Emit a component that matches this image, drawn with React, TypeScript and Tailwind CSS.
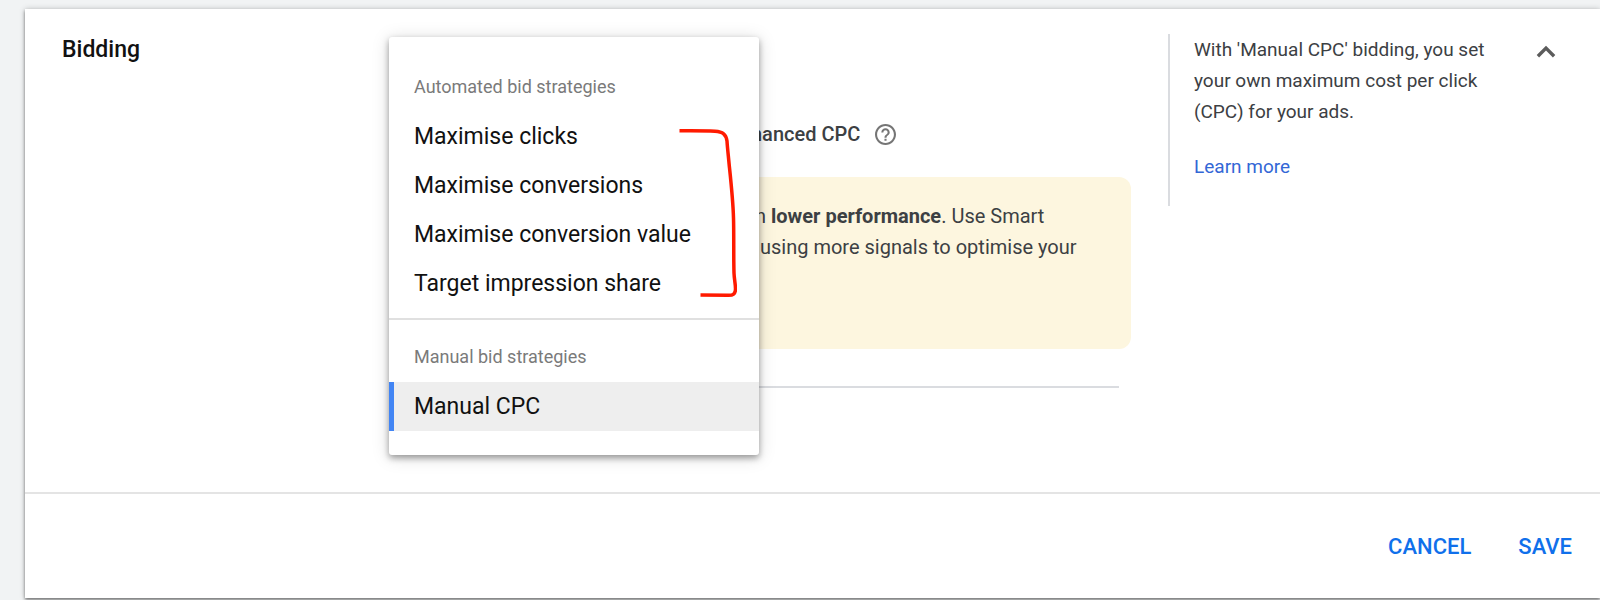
import { useState } from "react";

const automated = [
  "Maximise clicks",
  "Maximise conversions",
  "Maximise conversion value",
  "Target impression share",
];
const manual = ["Manual CPC"];

type GroupProps = {
  label: string;
  options: string[];
  selected: string;
  onSelect: (value: string) => void;
};

function StrategyGroup({ label, options, selected, onSelect }: GroupProps) {
  return (
    <div role="group" aria-label={label} className="flex flex-col">
      <div className="flex h-[51px] items-center px-[25px] text-[18px] text-[#7a7a7a]">
        {label}
      </div>
      {options.map((option) => (
        <button
          key={option}
          type="button"
          role="option"
          aria-selected={option === selected}
          onClick={() => onSelect(option)}
          className={
            option === selected
              ? "flex h-[49px] items-center border-l-5 border-[#4285f4] bg-[#eeeeee] pt-0.5 pl-5 text-left text-[23px] text-[#111111]"
              : "flex h-[49px] items-center px-[25px] pt-0.5 text-left text-[23px] text-[#111111]"
          }
        >
          {option}
        </button>
      ))}
    </div>
  );
}

export default function App() {
  const [selected, setSelected] = useState("Manual CPC");

  return (
    <div className="min-h-screen bg-[#f1f3f4] pt-[9px] pl-[25px] font-['Roboto',sans-serif]">
      <section className="bg-white shadow-[0_2px_3px_rgba(0,0,0,0.45),0_0_6px_rgba(0,0,0,0.2)]">
        <div className="flex pt-[25px]">
          <h2 className="w-[364px] shrink-0 pl-[37px] text-[23px] leading-[31px] font-medium text-[#111111]">
            Bidding
          </h2>

          <div className="relative w-[742px] shrink-0 pt-[84px] pb-[104px]">
            <div className="flex h-8 items-center gap-[15px] pl-[362px] text-[20px] font-medium text-[#3c4043]">
              <span>hanced CPC</span>
              <button type="button" aria-label="About Enhanced CPC">
                <svg viewBox="2 2 20 20" className="size-[21px] fill-[#757575]" aria-hidden="true">
                  <path d="M11 18h2v-2h-2v2zm1-16C6.48 2 2 6.48 2 12s4.48 10 10 10 10-4.48 10-10S17.52 2 12 2zm0 18c-4.41 0-8-3.59-8-8s3.59-8 8-8 8 3.59 8 8-3.59 8-8 8zm0-14c-2.21 0-4 1.79-4 4h2c0-1.1.9-2 2-2s2 .9 2 2c0 2-3 1.75-3 5h2c0-2.25 3-2.5 3-5 0-2.21-1.79-4-4-4z" />
                </svg>
              </button>
            </div>

            <div className="mt-[27px] h-[172px] rounded-xl bg-[#fdf6df] pt-6 pl-[366px] text-[20px] leading-[31px] text-[#3c4043]">
              <p>
                n <b>lower performance</b>. Use Smart
                <br />
                &nbsp;using more signals to optimise your
              </p>
            </div>

            <hr className="mt-[37px] mr-3 border-t-2 border-[#dadce0]" />

            <div
              role="listbox"
              aria-label="Bid strategy"
              className="absolute top-[3px] left-0 w-[370px] rounded-[3px] bg-white py-6 shadow-[0_3px_6px_rgba(0,0,0,0.35),0_2px_18px_rgba(0,0,0,0.15)]"
            >
              <StrategyGroup
                label="Automated bid strategies"
                options={automated}
                selected={selected}
                onSelect={setSelected}
              />
              <div className="mt-2.5 mb-[11px] border-t-2 border-[#e0e0e0]" />
              <StrategyGroup
                label="Manual bid strategies"
                options={manual}
                selected={selected}
                onSelect={setSelected}
              />
              <svg
                viewBox="0 0 60 170"
                className="pointer-events-none absolute top-[91px] left-[288px] h-[170px] w-[60px] fill-none stroke-[#ff1a00] stroke-[3.5]"
                aria-hidden="true"
              >
                <path
                  strokeLinejoin="round"
                  d="M2.5 2.8 C13 2.9 26 2.6 38 3.3 C46 3.8 49 6.500 50 13 C50.500 21 51.500 29 52.200 37 C54 54 56 72 56.500 90 C57 108 56.500 128 57 145 C57.200 151 58.500 156 58.500 161 C58.500 166 56 167.500 51 167.300 L23.500 167"
                />
              </svg>
            </div>
          </div>

          <aside className="ml-[37px] h-[172px] min-w-0 flex-1 border-l-2 border-[#dadce0] pl-6 text-[19px] leading-[31px] text-[#3c4043]">
            <p className="max-w-[300px]">
              With 'Manual CPC' bidding, you set your own maximum cost per click (CPC) for your ads.
            </p>
            <a href="#learn-more" className="mt-6 block text-[#3367d6]">
              Learn more
            </a>
          </aside>

          <button
            type="button"
            aria-label="Collapse bidding section"
            className="mr-[38px] flex size-8 shrink-0 items-center justify-center pt-1"
          >
            <svg viewBox="0 0 24 24" className="size-9 shrink-0 fill-[#5c5c5c]" aria-hidden="true">
              <path d="M12 7.800l-6.200 6.200 1.600 1.600L12 11l4.600 4.600L18.200 14z" />
            </svg>
          </button>
        </div>

        <footer className="flex h-[106px] items-center justify-end gap-[47px] border-t-2 border-[#e4e4e4] pr-7 text-[22px] font-medium text-[#1070eb]">
          <button type="button">CANCEL</button>
          <button type="button">SAVE</button>
        </footer>
      </section>
    </div>
  );
}
